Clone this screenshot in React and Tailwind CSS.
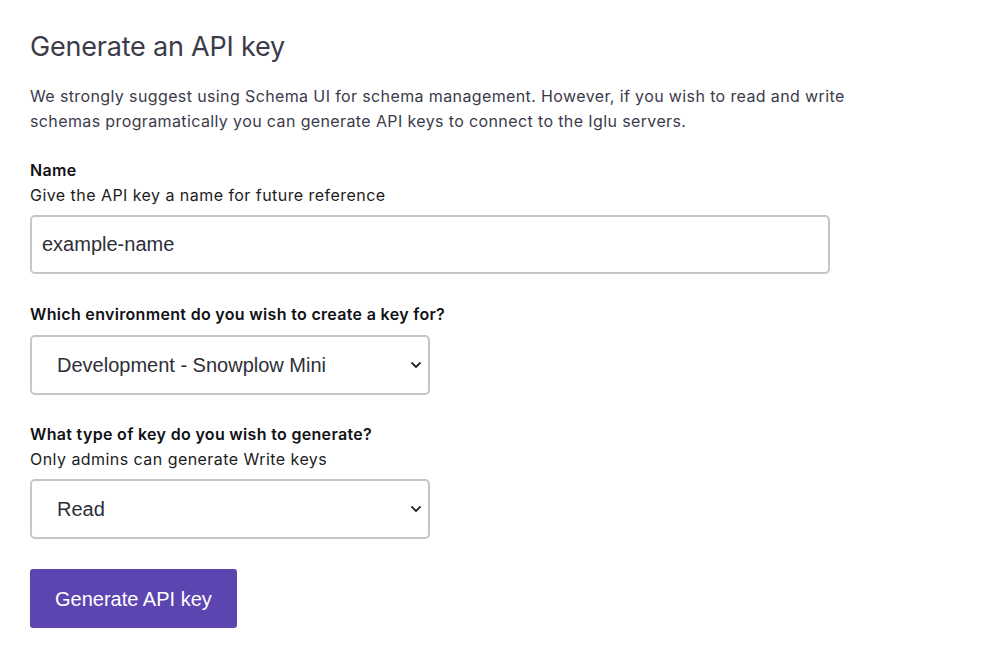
import React from "react";

function Chevron() {
  return (
    <svg className="pointer-events-none absolute right-[8px] top-1/2 -translate-y-1/2" width="12" height="8" viewBox="0 0 12 8" fill="none">
      <path d="M2 2l4 4 4-4" stroke="#2b2b33" strokeWidth="1.8" strokeLinecap="round" strokeLinejoin="round" />
    </svg>
  );
}

function Select({ value, options }) {
  return (
    <div className="relative w-[400px]">
      <select
        defaultValue={value}
        className="block w-full h-[60px] appearance-none rounded-[5px] border-2 border-[#c6c5cc] bg-white pl-[25px] pr-[30px] text-[20px] text-[#2e2e38] outline-none"
        style={{ fontFamily: '"Liberation Sans", Arial, sans-serif' }}
      >
        {options.map((o) => (
          <option key={o}>{o}</option>
        ))}
      </select>
      <Chevron />
    </div>
  );
}

export default function App() {
  return (
    <div
      className="min-h-[660px] bg-white px-[30px] pt-[30px] text-[#3b3b4a]"
      style={{ fontFamily: 'Inter, "Noto Sans", sans-serif' }}
    >
      <h1 className="text-[27px] leading-[34px] font-normal text-[#3b3b4a] tracking-[-0.2px]">
        Generate an API key
      </h1>
      <p className="mt-[20px] max-w-[860px] text-[16px] leading-[25px] tracking-[0.38px] text-[#3b3b4a]">
        We strongly suggest using Schema UI for schema management. However, if you wish to read and write
        <br />
        schemas programatically you can generate API keys to connect to the Iglu servers.
      </p>

      <div className="mt-[24px]">
        <div className="text-[16px] leading-[25px] font-semibold tracking-[0.3px] text-[#111116]">Name</div>
        <div className="text-[16px] leading-[25px] tracking-[0.45px] text-[#1c1c22]">Give the API key a name for future reference</div>
        <input
          defaultValue="example-name"
          className="mt-[7px] block h-[59px] w-[800px] rounded-[5px] border-2 border-[#c6c5cc] bg-white px-[10px] text-[20px] text-[#2e2e38] outline-none"
          style={{ fontFamily: '"Liberation Sans", Arial, sans-serif' }}
        />
      </div>

      <div className="mt-[28px]">
        <div className="text-[16px] leading-[25px] font-semibold tracking-[0.32px] text-[#111116]">
          Which environment do you wish to create a key for?
        </div>
        <div className="mt-[8px]">
          <Select value="Development - Snowplow Mini" options={["Development - Snowplow Mini", "Production"]} />
        </div>
      </div>

      <div className="mt-[27px]">
        <div className="text-[16px] leading-[25px] font-semibold tracking-[0.32px] text-[#111116]">
          What type of key do you wish to generate?
        </div>
        <div className="text-[16px] leading-[25px] tracking-[0.45px] text-[#1c1c22]">Only admins can generate Write keys</div>
        <div className="mt-[7px]">
          <Select value="Read" options={["Read", "Write"]} />
        </div>
      </div>

      <button
        className="mt-[30px] h-[59px] rounded-[3px] bg-[#5c45b0] px-[25px] text-[20px] text-white"
        style={{ fontFamily: '"Liberation Sans", Arial, sans-serif' }}
      >
        Generate API key
      </button>
    </div>
  );
}
